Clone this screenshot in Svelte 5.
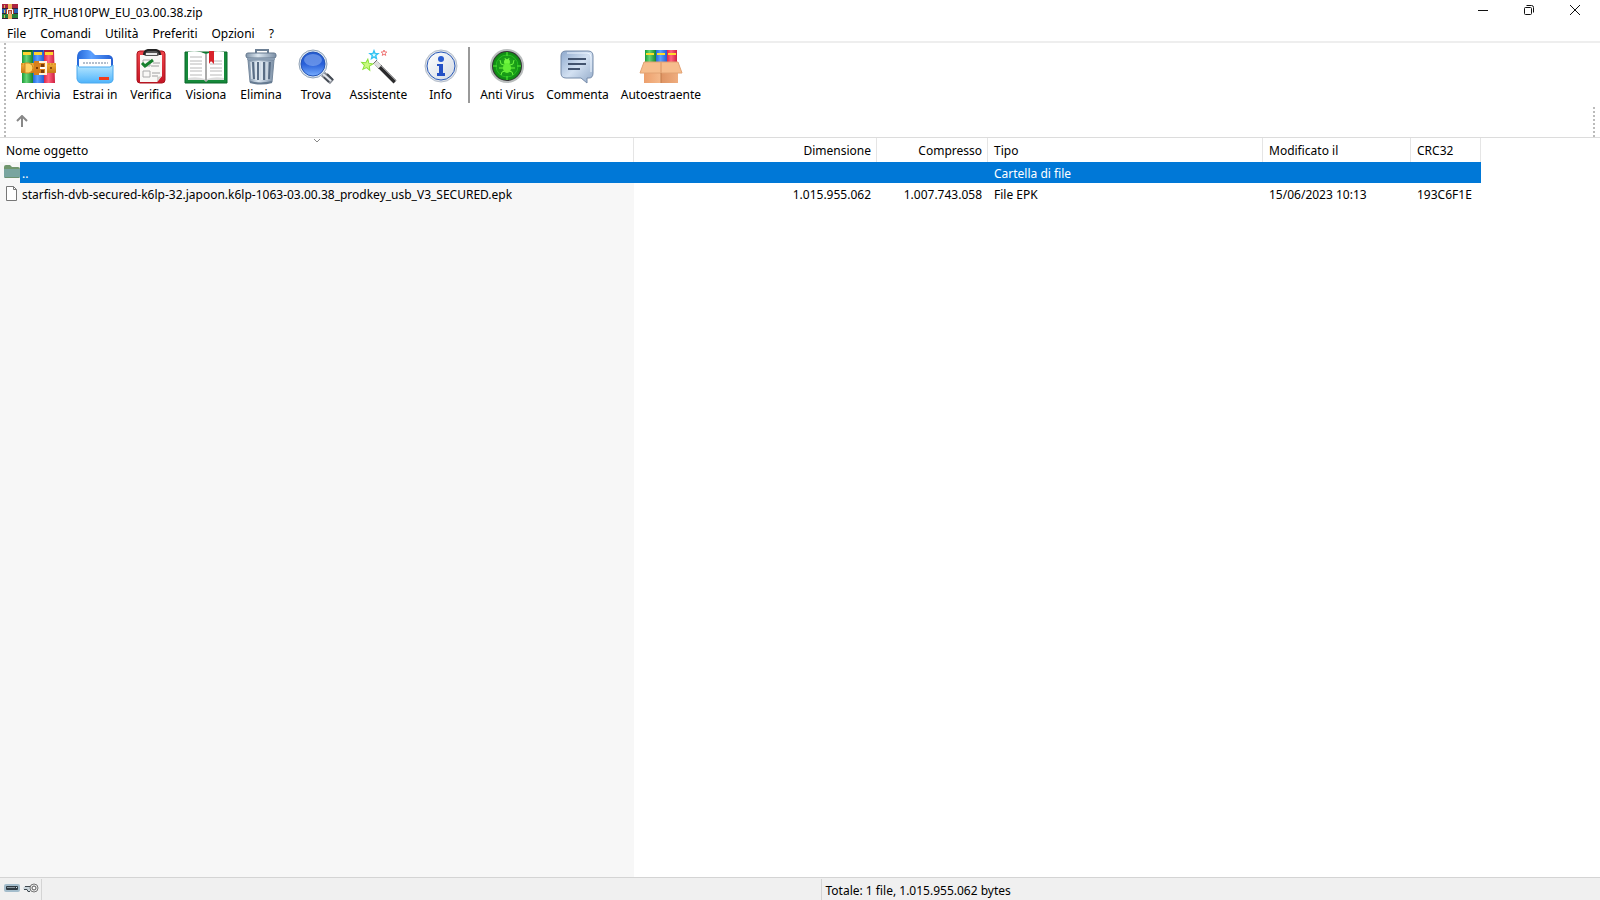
<script lang="ts">
	const menus = ['File', 'Comandi', 'Utilità', 'Preferiti', 'Opzioni', '?'];

	const fileTools = [
		{ icon: 'archive', label: 'Archivia' },
		{ icon: 'extract', label: 'Estrai in' },
		{ icon: 'test', label: 'Verifica' },
		{ icon: 'view', label: 'Visiona' },
		{ icon: 'delete', label: 'Elimina' },
		{ icon: 'find', label: 'Trova' },
		{ icon: 'wizard', label: 'Assistente' },
		{ icon: 'info', label: 'Info' }
	];

	const archiveTools = [
		{ icon: 'virus', label: 'Anti Virus' },
		{ icon: 'comment', label: 'Commenta' },
		{ icon: 'sfx', label: 'Autoestraente' }
	];

	const rows = [
		{ name: '..', size: '', packed: '', type: 'Cartella di file', date: '', crc: '', folder: true },
		{
			name: 'starfish-dvb-secured-k6lp-32.japoon.k6lp-1063-03.00.38_prodkey_usb_V3_SECURED.epk',
			size: '1.015.955.062',
			packed: '1.007.743.058',
			type: 'File EPK',
			date: '15/06/2023 10:13',
			crc: '193C6F1E',
			folder: false
		}
	];

	const star = 'M0-6l1.5 3.9 4.2.2-3.2 2.7 1 4.1L0 2.6l-3.5 2.3 1-4.1-3.2-2.7 4.2-.2z';

	let selected = $state(0);
</script>

{#snippet books()}
	<path fill="url(#green)" d="M1 1h11v33H1z" />
	<path fill="url(#blue)" d="M12 1h11v33H12z" />
	<path fill="url(#red)" d="M23 1h10l1 33H23z" />
	<path fill="#176b24" d="M1 1h10v2H1z" />
	<path fill="#1c48a0" d="M12 1h10v2H12z" />
	<path fill="#a81c38" d="M23 1h10v2H23z" />
	<path fill="#ffd52e" d="M2 3h8v3H2zM13 3h8v3h-8zM24 3h8v3h-8z" />
{/snippet}

{#snippet toolIcon(name: string)}
	<svg class="tool__icon" viewBox="0 0 44 36" aria-hidden="true">
		{#if name === 'archive'}
			<g transform="translate(5 0)">
				{@render books()}
				<rect x="0" y="14" width="35" height="10" rx="1" fill="url(#belt)" />
				<path d="M0 15h35M0 23h35" stroke="#c9801f" stroke-dasharray="2 1" />
				<path fill="#ffd264" stroke="#d08a20" d="M4 14h4q4 1 4 5t-4 5H4z" />
				<path fill="#d8801c" d="M13 12h13v14H13z" />
				<path fill="none" stroke="#fff3d6" stroke-width="2" d="M18 13h7v12h-7" />
				<path fill="#7c3d09" d="M15 18h2v2h-2zM20 15h3v3h-3zM20 21h3v3h-3z" />
				<path stroke="#fff" stroke-width="2" d="M19 19h5" />
				<path fill="#8c4a0c" d="M29 18h2v2h-2z" />
			</g>
		{:else if name === 'extract'}
			<path fill="url(#blue)" d="M4 9q0-7 5-8h6q3 0 5 3l2 2h14q4 1 4 5v18H4z" />
			<path fill="#fff" d="M6 10h32v11H6z" />
			<path stroke="#b4bfcd" stroke-width="2" stroke-dasharray="2 1" d="M10 14h25" />
			<path fill="url(#folder)" stroke="#4aa9ee" d="M6 18h31l3-2v15q-1 3-4 3H8q-3 0-4-4V16z" />
			<path fill="#ef3c1c" d="M26 28h10v3H26z" />
		{:else if name === 'test'}
			<rect x="8" y="2" width="28" height="32" rx="3" fill="url(#darkred)" stroke="#a9141d" />
			<path fill="#f9f8f6" d="M11 6h22v21l-5 6H11z" />
			<path fill="#d4d1cc" d="M33 27l-5 6v-5z" />
			<rect x="15" y="2" width="15" height="5" rx="2" fill="#555" />
			<path stroke="#e8e8e8" stroke-width="2" d="M17 5h11" />
			<path fill="none" stroke="#222" stroke-width="2" d="M15 6q0-4 4-5h8q4 1 4 5" />
			<path fill="none" stroke="#aaa" d="M14 11h7v6h-7zM14 22h7v6h-7z" />
			<path fill="none" stroke="#16802d" stroke-width="3" d="M13 14l3 3 8-6" />
			<path stroke="#9e9e9e" d="M24 14h7M22 17h8M23 24h8M23 27h6" />
		{:else if name === 'view'}
			<path fill="#15893a" stroke="#0a6628" d="M1 3h42v31H1z" />
			<path fill="#ddd" d="M4 4q10-3 18 1 9-4 18-1v27H24l-2 2-2-2H4z" />
			<path fill="#fff" d="M4 3q10-2 17 2v25q-8-3-17-1zM23 5q8-4 17-2v26q-9-2-17 1z" />
			<path stroke="#b8b8b8" d="M6 8h12M6 12h12M6 15h12M6 19h12M6 22h12M6 26h12M26 12h12M26 15h12M26 19h12M26 22h12M26 26h12" />
			<path stroke="#777" d="M22 5v28" />
			<path fill="#d8232b" d="M25 2h5v13l-3-3-2 3z" />
		{:else if name === 'delete'}
			<path fill="none" stroke="#6c7f94" stroke-width="2" d="M17 5V1h12v4" />
			<rect x="7" y="4" width="30" height="5" rx="2" fill="url(#steel)" stroke="#65788e" />
			<path fill="url(#steel)" stroke="#75889d" d="M9 11h26l-2 22q-11 3-22 0z" />
			<path fill="#8b9eb3" d="M8 9h28v2H8z" />
			<path stroke="#596d85" stroke-width="2" d="M14 13l1 17M19 13v18M25 13v18M31 13l-1 17" />
			<path stroke="#edf4fa" d="M12 13l1 17M17 13v18M23 13v18M28 13v18" />
			<path fill="none" stroke="#667b92" stroke-width="2" d="M11 33q11 3 22 0" />
		{:else if name === 'find'}
			<path stroke="#8a8f98" stroke-width="6" d="M29 25l9 8" />
			<path stroke="#454b54" stroke-width="2" d="M30 28l5 5M33 25l6 6" />
			<path stroke="#e4e7ec" stroke-width="2" d="M29 25l8 7" />
			<circle cx="19" cy="15" r="14" fill="#d9e4f0" stroke="#93a4b8" />
			<circle cx="19" cy="15" r="12" fill="url(#lens)" stroke="#2455b8" />
			<ellipse cx="19" cy="11" rx="9" ry="6" fill="#b9d5ff" opacity=".4" />
		{:else if name === 'wizard'}
			<path stroke="#2b2b2d" stroke-width="4" d="M20 14l19 19" />
			<path stroke="#8d8d8f" d="M21 13l19 19" />
			<path stroke="#dedede" stroke-width="4" d="M19 13l5 5" />
			<path stroke="#6b6b6b" d="M17 15l4-4M22 20l4-4" />
			<path fill="#c9fa80" stroke="#8be03c" stroke-width="1" transform="translate(11 16) rotate(8)" d={star} />
			<path fill="#e1fbff" stroke="#35c4f3" stroke-width="2" transform="translate(18 6) scale(.7)" d={star} />
			<path fill="#fff" stroke="#f07777" stroke-width="2" transform="translate(28 4) scale(.5)" d={star} />
		{:else if name === 'info'}
			<circle cx="22" cy="17" r="16" fill="#dde2e9" stroke="#b4bdca" />
			<circle cx="22" cy="17" r="14" fill="url(#silver)" stroke="#2858b8" />
			<circle cx="22" cy="10" r="3" fill="#285bd1" />
			<path fill="#234fc5" d="M18 15h6v9h2v3h-8v-3h2v-7h-2z" />
		{:else if name === 'virus'}
			<circle cx="22" cy="17" r="16" fill="#333" stroke="#b9bdbd" stroke-width="2" />
			<circle cx="22" cy="17" r="14" fill="url(#radar)" />
			<circle cx="22" cy="17" r="11" fill="none" stroke="#26bf20" />
			<path stroke="#57ed35" d="M22 3v4M22 27v4M8 17h4M32 17h4" />
			<path fill="none" stroke="#6cf53d" d="M20 9l1 3M24 9l-1 3M15 11l1 4 3 1M29 11l-1 4-3 1M14 19h5M30 19h-5M16 26l1-3 3-1M28 26l-1-3-3-1" />
			<circle cx="22" cy="13" r="3" fill="#71f83f" />
			<ellipse cx="22" cy="19" rx="4" ry="5" fill="#62ed35" />
		{:else if name === 'comment'}
			<path fill="url(#bubble)" stroke="#778caa" d="M11 2h22q5 0 5 5v17q0 5-4 5h-2v5l-6-5H11q-5 0-5-5V7q0-5 5-5z" />
			<path fill="none" stroke="#edf5ff" d="M12 4h20q4 0 4 4v15" />
			<path stroke="#42536e" stroke-width="2" d="M13 10h18M13 15h18M13 20h12" />
		{:else if name === 'sfx'}
			<path fill="url(#green)" d="M6 1h11v14H6z" />
			<path fill="url(#blue)" d="M17 1h11v14H17z" />
			<path fill="url(#red)" d="M28 1h10v14H28z" />
			<path fill="#ffdd28" d="M7 4h8v2H7zM18 4h8v2h-8zM29 4h8v2h-8z" />
			<path fill="url(#box)" d="M5 13h34v21H5z" />
			<path fill="#b87143" d="M5 13h34v2H5z" />
			<path fill="#f6bd8d" stroke="#e2a273" d="M5 13h17v11H1zM22 13h17l4 11H22z" />
			<path stroke="#c17c4b" d="M22 24v10" />
		{/if}
	</svg>
{/snippet}

{#snippet tool(item: { icon: string; label: string })}
	<button type="button" class="tool">
		{@render toolIcon(item.icon)}
		<span>{item.label}</span>
	</button>
{/snippet}

<svg class="defs" width="0" height="0" aria-hidden="true">
	<defs>
		<linearGradient id="green"><stop stop-color="#189b37" /><stop offset=".4" stop-color="#65d477" /><stop offset="1" stop-color="#16852e" /></linearGradient>
		<linearGradient id="blue"><stop stop-color="#2568d9" /><stop offset=".4" stop-color="#5ba0ff" /><stop offset="1" stop-color="#245ed2" /></linearGradient>
		<linearGradient id="red"><stop stop-color="#dc2547" /><stop offset=".4" stop-color="#ff6580" /><stop offset="1" stop-color="#ce1f40" /></linearGradient>
		<linearGradient id="belt" x2="0" y2="1"><stop stop-color="#f7b43c" /><stop offset="1" stop-color="#c87514" /></linearGradient>
		<linearGradient id="folder" x2="0" y2="1"><stop stop-color="#bae8ff" /><stop offset="1" stop-color="#4fb4fb" /></linearGradient>
		<linearGradient id="darkred" x2="0" y2="1"><stop stop-color="#f0444a" /><stop offset="1" stop-color="#c51525" /></linearGradient>
		<linearGradient id="steel"><stop stop-color="#7f93a8" /><stop offset=".4" stop-color="#dce7f1" /><stop offset="1" stop-color="#7b8fa6" /></linearGradient>
		<linearGradient id="lens" x2="0" y2="1"><stop stop-color="#245bcf" /><stop offset=".5" stop-color="#285fd8" /><stop offset="1" stop-color="#77adff" /></linearGradient>
		<linearGradient id="silver" x2="1" y2="1"><stop stop-color="#fff" /><stop offset="1" stop-color="#d2d9e4" /></linearGradient>
		<radialGradient id="radar"><stop stop-color="#2cb81e" /><stop offset="1" stop-color="#0f8a14" /></radialGradient>
		<linearGradient id="bubble" x2="1" y2="1"><stop stop-color="#8da8cc" /><stop offset=".5" stop-color="#d3e1f2" /><stop offset="1" stop-color="#91a9c8" /></linearGradient>
		<linearGradient id="box"><stop stop-color="#ec9f6c" /><stop offset=".5" stop-color="#f5ba8c" /><stop offset=".5" stop-color="#df9463" /><stop offset="1" stop-color="#efad7f" /></linearGradient>
	</defs>
</svg>

<div class="window">
	<header class="titlebar">
		<svg class="titlebar__icon" viewBox="0 0 16 16" aria-hidden="true">
			<path fill="#ac2440" d="M0 0h16v5H0z" />
			<path fill="#2860b6" d="M0 5h16v5H0z" />
			<path fill="#23813a" d="M0 10h16v5H0z" />
			<path fill="#34213a" d="M0 4h16v1H0zM0 9h16v1H0zM0 14h16v1H0z" />
			<path fill="#edb35d" d="M6 0h4v15H6z" />
			<path fill="#a9462e" d="M4 5h8v5H4z" />
			<path fill="none" stroke="#fff" d="M5.5 10V5.5h5V10M8 7v3" />
			<path fill="#d9b654" d="M2 1h1v3H2zM2 6h1v3H2zM2 11h1v3H2z" />
		</svg>
		<h1>PJTR_HU810PW_EU_03.00.38.zip</h1>
		<div class="titlebar__controls">
			<button type="button" aria-label="Riduci a icona">
				<svg viewBox="0 0 12 12"><path d="M1 6.5h10" /></svg>
			</button>
			<button type="button" aria-label="Ripristino">
				<svg viewBox="0 0 12 12"><rect x="1.5" y="3.5" width="7" height="7" rx="1" /><path d="M3.5 1.5h5q2 0 2 2v5" /></svg>
			</button>
			<button type="button" aria-label="Chiudi">
				<svg viewBox="0 0 12 12"><path d="M1 1l10 10M11 1L1 11" /></svg>
			</button>
		</div>
	</header>

	<nav class="menubar">
		{#each menus as menu}
			<button type="button">{menu}</button>
		{/each}
	</nav>

	<div class="bars">
		<div class="toolbar">
			{#each fileTools as item}
				{@render tool(item)}
			{/each}
			<div class="toolbar__separator"></div>
			{#each archiveTools as item}
				{@render tool(item)}
			{/each}
		</div>
		<div class="pathbar">
			<button type="button" aria-label="Cartella superiore">
				<svg viewBox="0 0 12 12"><path d="M6 12V2M1 6l5-5 5 5" /></svg>
			</button>
			<div class="pathbar__grip"></div>
		</div>
	</div>

	<main class="files">
		<table>
			<colgroup>
				<col class="col-name" />
				<col class="col-size" />
				<col class="col-packed" />
				<col class="col-type" />
				<col class="col-date" />
				<col class="col-crc" />
			</colgroup>
			<thead>
				<tr>
					<th class="sorted">
						Nome oggetto
						<svg viewBox="0 0 8 5" aria-hidden="true"><path d="M1 1l3 3 3-3" /></svg>
					</th>
					<th class="number">Dimensione</th>
					<th class="number">Compresso</th>
					<th>Tipo</th>
					<th>Modificato il</th>
					<th>CRC32</th>
				</tr>
			</thead>
			<tbody>
				{#each rows as row, i}
					<tr class:selected={selected === i} onclick={() => (selected = i)}>
						<td class="name">
							<div>
								<svg viewBox="0 0 16 16" aria-hidden="true">
									{#if row.folder}
										<path fill="#70966d" d="M0 2q0-2 2-2h4l2 2h6q2 0 2 2v3H0z" />
										<path fill="#79a5a0" d="M0 4h16v8q0 1-1 1H1q-1 0-1-1z" />
										<path fill="#6d9272" d="M1 12h14v1H1z" />
									{:else}
										<path fill="#fff" stroke="#777" d="M2.5.5h7l3 3v11h-10z" />
										<path fill="none" stroke="#777" d="M9.5.5v3h3" />
									{/if}
								</svg>
								<span>{row.name}</span>
							</div>
						</td>
						<td class="number">{row.size}</td>
						<td class="number">{row.packed}</td>
						<td>{row.type}</td>
						<td>{row.date}</td>
						<td>{row.crc}</td>
					</tr>
				{/each}
			</tbody>
		</table>
	</main>

	<footer class="statusbar">
		<div class="statusbar__icons">
			<svg viewBox="0 0 16 12" aria-hidden="true">
				<rect x="0" y="2" width="16" height="8" rx="2" fill="#a4bdcc" />
				<rect x="2" y="4" width="12" height="4" rx="1" fill="#303b43" />
				<path stroke="#8b989f" d="M3 5.5h8" />
				<path fill="#d7e5e9" d="M12 5h1v1h-1z" />
			</svg>
			<svg viewBox="0 0 16 12" aria-hidden="true">
				<path fill="#c9d4da" d="M7 4H2L0 6l1 2h3l1 2 2-1h2z" />
				<path fill="none" stroke="#3f484e" d="M1 7.5h3l1 2h2M2 4.5h5" />
				<circle cx="11" cy="6" r="4" fill="#eee" stroke="#777" />
				<circle cx="11" cy="6" r="2" fill="#fff" stroke="#555" />
			</svg>
		</div>
		<div class="statusbar__pane"></div>
		<div class="statusbar__pane">Totale: 1 file, 1.015.955.062 bytes</div>
	</footer>
</div>

<style>
	:global(body) {
		margin: 0;
		background: #fff;
	}

	.defs {
		position: absolute;
	}

	.window {
		--name-width: 634px;
		--line: #dcdcdc;
		display: flex;
		flex-direction: column;
		min-height: 100vh;
		background: #fff;
		color: #000;
		font-family: 'Noto Sans', 'Open Sans', sans-serif;
		font-size: 12px;
		line-height: 16px;
	}

	button {
		padding: 0;
		border: 0;
		background: none;
		color: inherit;
		font: inherit;
	}

	.titlebar {
		display: flex;
		align-items: center;
		height: 24px;
		padding: 0 2px;
	}

	.titlebar__icon {
		width: 16px;
		height: 16px;
		margin-right: 5px;
	}

	h1 {
		margin: 0;
		padding-top: 2px;
		font-size: 12px;
		font-weight: 400;
	}

	.titlebar__controls {
		display: flex;
		margin-left: auto;
	}

	.titlebar__controls button {
		width: 46px;
		height: 24px;
		padding-bottom: 4px;
	}

	.titlebar__controls svg {
		display: block;
		width: 12px;
		height: 12px;
		margin: 0 auto;
		fill: none;
		stroke: #111;
	}

	.menubar {
		display: flex;
		gap: 14px;
		height: 17px;
		padding: 0 7px;
		border-bottom: 2px solid #eee;
	}

	.menubar button {
		line-height: 20px;
	}

	.bars {
		padding-left: 10px;
		border-bottom: 1px solid var(--line);
		background: repeating-linear-gradient(#bbb 0 2px, #fff 2px 4px) 4px 0 / 2px 100% no-repeat;
	}

	.toolbar {
		display: flex;
		align-items: flex-start;
		height: 60px;
		padding-top: 4px;
	}

	.toolbar__separator {
		width: 2px;
		height: 56px;
		margin-right: 4px;
		background: #999;
	}

	.tool {
		display: flex;
		flex-direction: column;
		align-items: center;
		gap: 2px;
		min-width: 55px;
		padding: 2px 6px 0;
		white-space: nowrap;
	}

	.tool__icon {
		width: 44px;
		height: 36px;
		margin: 0 -1px;
	}

	.pathbar {
		display: flex;
		justify-content: space-between;
		height: 30px;
		padding-right: 5px;
	}

	.pathbar button {
		width: 24px;
	}

	.pathbar svg {
		display: block;
		width: 12px;
		height: 12px;
		margin: 0 auto 2px;
		fill: none;
		stroke: #888;
		stroke-width: 2;
	}

	.pathbar__grip {
		width: 2px;
		background: repeating-linear-gradient(#bbb 0 2px, #fff 2px 4px);
	}

	.files {
		flex: 1;
		background: linear-gradient(#f7f7f7, #f7f7f7) 0 0 / var(--name-width) 100% no-repeat;
	}

	table {
		width: 0;
		table-layout: fixed;
		border-collapse: separate;
		border-spacing: 0;
		white-space: nowrap;
	}

	.col-name {
		width: var(--name-width);
	}

	.col-size {
		width: 243px;
	}

	.col-packed {
		width: 111px;
	}

	.col-type {
		width: 275px;
	}

	.col-date {
		width: 148px;
	}

	.col-crc {
		width: 70px;
	}

	th,
	td {
		box-sizing: border-box;
		padding: 2px 6px 0;
		font-weight: 400;
		text-align: left;
	}

	th {
		height: 24px;
		border-right: 1px solid #e5e5e5;
		background: #fff;
	}

	td {
		height: 21px;
	}

	.number {
		text-align: right;
	}

	th.number {
		padding-right: 5px;
	}

	.sorted {
		position: relative;
	}

	.sorted svg {
		position: absolute;
		top: 0;
		left: 50%;
		width: 8px;
		height: 5px;
		margin-left: -4px;
		fill: none;
		stroke: #888;
	}

	.name {
		padding: 0 0 0 4px;
	}

	.name div {
		display: flex;
		align-items: center;
	}

	.name svg {
		flex-shrink: 0;
		width: 16px;
		height: 16px;
	}

	.name span {
		flex: 1;
		padding: 2px 0 0 2px;
		line-height: 19px;
	}

	.selected td:not(.name),
	.selected .name span {
		background: #0078d7;
		color: #fff;
	}

	.statusbar {
		display: flex;
		height: 22px;
		border-top: 1px solid #d4d4d4;
		background: #f0f0f0;
	}

	.statusbar__icons {
		display: flex;
		align-items: center;
		gap: 3px;
		padding: 0 2px 2px 4px;
	}

	.statusbar__icons svg {
		width: 16px;
		height: 12px;
	}

	.statusbar__pane {
		flex: 1;
		margin-top: 1px;
		padding-left: 4px;
		border-left: 1px solid #d4d4d4;
		line-height: 24px;
	}
</style>
